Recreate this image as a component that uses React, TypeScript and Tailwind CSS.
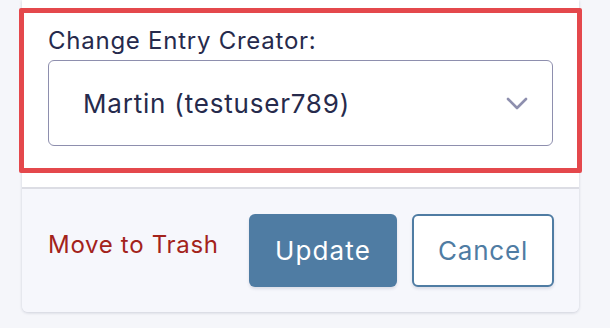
import React from 'react';

const font = { fontFamily: 'Inter, "Noto Sans", sans-serif' };

export default function App() {
  return (
    <div className="w-[610px] h-[328px] overflow-hidden bg-[#f5f6fa] pl-[22px]" style={font}>
      <div className="w-[557px] rounded-b-[6px] shadow-[0_1px_3px_rgba(30,40,80,0.18)] overflow-visible">
        {/* Section creator */}
        <div className="relative bg-white px-[26px] pt-[26px] pb-[41px] border-b-2 border-[#dcdde4]">
          <label className="block text-[24px] leading-[30px] tracking-[0.75px] text-[#262a4c] mb-[4px]">Change Entry Creator:</label>
          <div className="h-[86px] rounded-[6px] border-[1.5px] border-[#8e8fae] flex items-center justify-between pl-[34px] pr-[24px]">
            <span className="text-[26px] tracking-[0.8px] text-[#262a4c]">Martin (testuser789)</span>
            <svg width="22" height="13" viewBox="0 0 22 13" fill="none">
              <path d="M2 2l9 9 9-9" stroke="#8e8fae" strokeWidth="2.6" strokeLinecap="round" strokeLinejoin="round" />
            </svg>
          </div>
          {/* annotation box */}
          <div className="absolute left-[-3px] right-[-3px] top-[8px] bottom-[14px] border-[5px] border-[#e4484c] rounded-[2px] pointer-events-none" />
        </div>

        {/* Footer */}
        <div className="bg-[#f6f7fc] rounded-b-[6px] flex items-center pl-[26px] pr-[25px] pt-[25px] pb-[25px]">
          <a className="text-[24px] tracking-[0.7px] text-[#a3231b] mb-[12px]">Move to Trash</a>
          <div className="ml-auto flex gap-[15px]">
            <button className="w-[148px] h-[73px] rounded-[6px] bg-[#4f7ca3] text-white text-[26px] tracking-[1.1px] shadow-[0_2px_3px_rgba(30,40,80,0.12)]">Update</button>
            <button className="w-[142px] h-[73px] rounded-[6px] bg-white border-2 border-[#4f7ca3] text-[#4f7ca3] text-[26px] tracking-[0.8px] shadow-[0_2px_3px_rgba(30,40,80,0.12)]">Cancel</button>
          </div>
        </div>
      </div>
    </div>
  );
}
